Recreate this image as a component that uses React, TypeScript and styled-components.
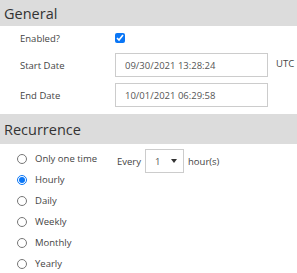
import React, { useState } from 'react'
import styled, { createGlobalStyle } from 'styled-components'

const GlobalStyle = createGlobalStyle`
    body {
        margin: 0;
        background: #ffffff;
        font-family: "Open Sans", "Liberation Sans", sans-serif;
        color: #333333;
    }
`

const Page = styled.div`
    width: 297px;
    height: 273px;
    overflow: hidden;
`

const SectionHeader = styled.div<{ $height: number }>`
    display: flex;
    align-items: center;
    height: ${p => p.$height}px;
    padding-left: 4px;
    background-color: #dcdcdc;
    font-size: 14.5px;
    color: #333333;
`

const FormGrid = styled.div`
    display: grid;
    grid-template-columns: 95px 153px auto;
    grid-template-rows: 18px 24px 24px;
    row-gap: 6px;
    align-items: center;
    padding: 3px 0 7px 20px;
`

const Label = styled.div`
    font-size: 9.5px;
    color: #444444;
`

const Check = styled.input`
    width: 10px;
    height: 10px;
    margin: 0;
    accent-color: #0a76f6;
`

const TextField = styled.input`
    box-sizing: border-box;
    width: 153px;
    height: 24px;
    margin: 0;
    padding: 0 9px;
    border: 1px solid #cccccc;
    font-family: inherit;
    font-size: 9.5px;
    color: #555555;
    outline: none;
`

const Suffix = styled.div`
    padding: 0 0 3px 8px;
    font-size: 9.5px;
    color: #444444;
`

const RecurrenceBody = styled.div`
    display: flex;
    padding-top: 4px;
`

const RadioList = styled.div`
    display: flex;
    flex-direction: column;
    width: 117px;
    padding-left: 17px;
    box-sizing: border-box;
`

const RadioRow = styled.label`
    display: flex;
    align-items: center;
    gap: 8px;
    height: 21px;
    font-size: 9.5px;
    color: #444444;
`

const Radio = styled.input`
    width: 10px;
    height: 10px;
    margin: 0;
    accent-color: #0a76f6;
`

const EveryRow = styled.div`
    display: flex;
    align-items: center;
    gap: 4px;
    height: 24px;
    margin-top: 1px;
    font-size: 9.5px;
    color: #444444;
`

const SelectBox = styled.div`
    box-sizing: border-box;
    display: flex;
    align-items: center;
    justify-content: space-between;
    width: 39px;
    height: 24px;
    padding: 0 6px 0 9px;
    border: 1px solid #cccccc;
    color: #555555;
`

const options = ['Only one time', 'Hourly', 'Daily', 'Weekly', 'Monthly', 'Yearly']

const App = () => {
    const [enabled, setEnabled] = useState<boolean>(true)
    const [mode, setMode] = useState<string>('Hourly')

    return (
        <Page>
            <GlobalStyle />
            <SectionHeader $height={26}>General</SectionHeader>
            <FormGrid>
                <Label>Enabled?</Label>
                <Check type="checkbox" checked={enabled} onChange={() => setEnabled(!enabled)} />
                <div />
                <Label>Start Date</Label>
                <TextField defaultValue="09/30/2021 13:28:24" />
                <Suffix>UTC</Suffix>
                <Label>End Date</Label>
                <TextField defaultValue="10/01/2021 06:29:58" />
                <div />
            </FormGrid>
            <SectionHeader $height={30}>Recurrence</SectionHeader>
            <RecurrenceBody>
                <RadioList>
                    {options.map(item => (
                        <RadioRow key={item}>
                            <Radio type="radio" name="recurrence" checked={mode === item} onChange={() => setMode(item)} />
                            {item}
                        </RadioRow>
                    ))}
                </RadioList>
                <EveryRow>
                    Every
                    <SelectBox>
                        1
                        <svg width="6" height="4" viewBox="0 0 6 4">
                            <path d="M0 0 L6 0 L3 4 Z" fill="#333" />
                        </svg>
                    </SelectBox>
                    hour(s)
                </EveryRow>
            </RecurrenceBody>
        </Page>
    )
}

export default App
